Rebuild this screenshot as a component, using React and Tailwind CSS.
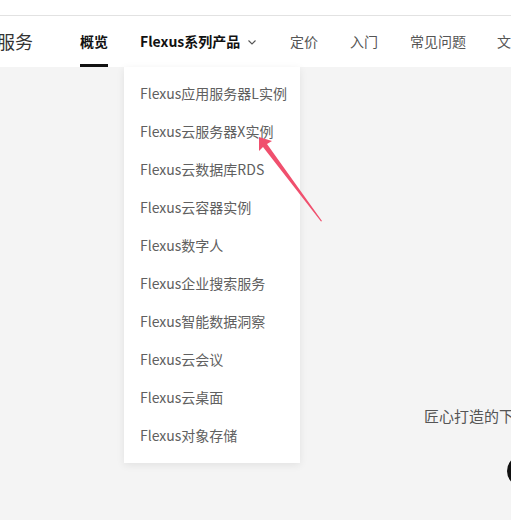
import React from 'react';

const items = [
  'Flexus应用服务器L实例',
  'Flexus云服务器X实例',
  'Flexus云数据库RDS',
  'Flexus云容器实例',
  'Flexus数字人',
  'Flexus企业搜索服务',
  'Flexus智能数据洞察',
  'Flexus云会议',
  'Flexus云桌面',
  'Flexus对象存储',
];

const font = { fontFamily: '"Noto Sans CJK SC", "Noto Sans", sans-serif' };

export default function App() {
  return (
    <div className="relative w-[511px] h-[520px] overflow-hidden bg-[#f4f4f4]" style={font}>
      {/* top strip */}
      <div className="h-[16px] bg-white border-b border-[#e2e2e2]" />

      {/* nav bar */}
      <div className="h-[51px] bg-white flex items-stretch whitespace-nowrap">
        <div className="shrink-0 flex items-center text-[18px] text-[#333] -ml-[3px] w-[83px]">服务</div>
        <div className="shrink-0 relative flex items-center text-[14px] font-bold text-[#111] w-[60px]">
          概览
          <div className="absolute left-0 bottom-0 w-[28px] h-[3px] bg-[#111]" />
        </div>
        <div className="shrink-0 flex items-center text-[14px] font-bold text-[#111] w-[150px]">
          Flexus系列产品
          <svg className="ml-[7px]" width="10" height="10" viewBox="0 0 10 10">
            <path d="M1.5 3.5 L5 7 L8.5 3.5" fill="none" stroke="#555" strokeWidth="1.1" />
          </svg>
        </div>
        <div className="shrink-0 flex items-center text-[14px] text-[#555] w-[60px]">定价</div>
        <div className="shrink-0 flex items-center text-[14px] text-[#555] w-[60px]">入门</div>
        <div className="shrink-0 flex items-center text-[14px] text-[#555] w-[87px]">常见问题</div>
        <div className="shrink-0 flex items-center text-[14px] text-[#555]">文档</div>
      </div>

      {/* dropdown */}
      <div className="absolute left-[124px] top-[67px] w-[176px] bg-white shadow-[0_2px_8px_rgba(0,0,0,0.08)] pt-[7px] pb-[9px]">
        {items.map((t) => (
          <div key={t} className="h-[38px] flex items-center pl-[16px] text-[14px] text-[#606060] whitespace-nowrap">
            {t}
          </div>
        ))}
      </div>

      {/* right side content */}
      <div className="absolute left-[424px] top-[405px] text-[15px] text-[#555] whitespace-nowrap">匠心打造的下一代云服务</div>
      <div className="absolute left-[507px] top-[455px] w-[36px] h-[32px] rounded-full bg-[#111]" />

      {/* red arrow */}
      <svg className="absolute left-0 top-0 pointer-events-none" width="511" height="520">
        <path d="M259 137 L272 141 L267 144 L322 221 L321 221.5 L263 147 L259 151 Z" fill="#f0506e" />
      </svg>
    </div>
  );
}
